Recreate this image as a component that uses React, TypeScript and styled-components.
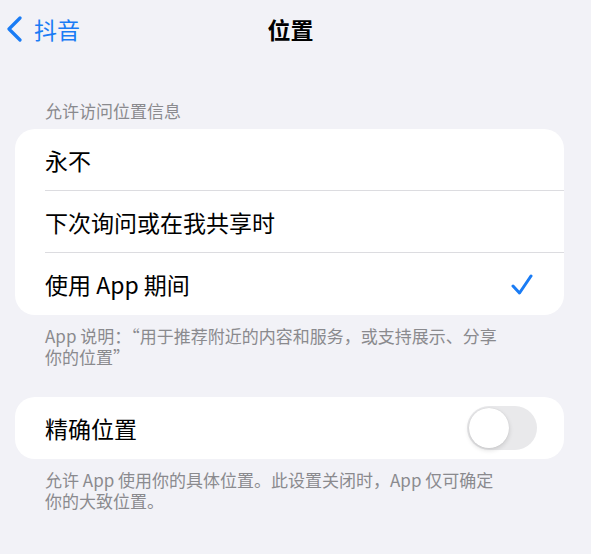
import styled, { createGlobalStyle } from "styled-components";

const GlobalStyle = createGlobalStyle`
  html, body {
    margin: 0;
    padding: 0;
    background: #f2f2f7;
  }
  body {
    font-family: "Noto Sans CJK SC", "Noto Sans", sans-serif;
    -webkit-font-smoothing: antialiased;
  }
`;

const Page = styled.div`
  width: 591px;
  min-height: 554px;
  background: #f2f2f7;
  display: flex;
  flex-direction: column;
`;

const NavBar = styled.div`
  height: 58px;
  padding-right: 10px;
  display: grid;
  grid-template-columns: 1fr auto 1fr;
  align-items: center;
`;

const BackButton = styled.a`
  display: flex;
  align-items: center;
  gap: 11px;
  padding-left: 6px;
  color: #1a7cf5;
  font-size: 23px;
  line-height: 28px;
  cursor: pointer;
`;

const NavTitle = styled.h1`
  margin: 0;
  font-size: 23px;
  line-height: 28px;
  font-weight: 700;
  color: #000000;
`;

const SectionHeader = styled.div`
  margin-top: 42px;
  padding: 0 45px;
  font-size: 17px;
  line-height: 22px;
  color: #8a8a8e;
`;

const Card = styled.div<{ $top: number }>`
  margin: ${(p) => p.$top}px 27px 0 15px;
  background: #ffffff;
  border-radius: 20px;
  overflow: hidden;
`;

const Row = styled.div`
  height: 62px;
  margin-left: 30px;
  padding-right: 27px;
  display: flex;
  align-items: center;
  justify-content: space-between;
  border-bottom: 1px solid #dcdce0;
  box-sizing: border-box;
  font-size: 23px;
  color: #000000;

  &:last-child {
    border-bottom: none;
  }
`;

const Footer = styled.div`
  padding: 10px 45px 0;
  font-size: 17px;
  line-height: 21px;
  color: #8a8a8e;
`;

const Track = styled.div<{ $on: boolean }>`
  width: 70px;
  height: 44px;
  border-radius: 22px;
  background: ${(p) => (p.$on ? "#34c759" : "#e9e9eb")};
  display: flex;
  align-items: center;
  justify-content: ${(p) => (p.$on ? "flex-end" : "flex-start")};
  padding: 0 2px;
  box-sizing: border-box;
`;

const Knob = styled.div`
  width: 40px;
  height: 40px;
  border-radius: 50%;
  background: #ffffff;
  box-shadow: 0 2px 5px rgba(0, 0, 0, 0.14), 0 0 1px rgba(0, 0, 0, 0.12);
`;

const Chevron = () => (
  <svg width="17" height="26" viewBox="0 0 17 26">
    <polyline
      points="14,2 3,13 14,24"
      fill="none"
      stroke="#1a7cf5"
      strokeWidth="3.2"
      strokeLinecap="round"
      strokeLinejoin="round"
    />
  </svg>
);

const Check = () => (
  <svg width="22" height="22" viewBox="0 0 22 22" style={{ marginRight: 4, marginTop: 2 }}>
    <polyline
      points="2,12 8.5,19 20,2"
      fill="none"
      stroke="#1a7cf5"
      strokeWidth="3"
      strokeLinecap="round"
      strokeLinejoin="round"
    />
  </svg>
);

const Toggle = ({ on }: { on: boolean }) => (
  <Track $on={on}>
    <Knob />
  </Track>
);

const options = ["永不", "下次询问或在我共享时", "使用 App 期间"];

export default function App() {
  const selected = 2;

  return (
    <Page>
      <GlobalStyle />
      <NavBar>
        <BackButton>
          <Chevron />
          抖音
        </BackButton>
        <NavTitle>位置</NavTitle>
        <div />
      </NavBar>

      <SectionHeader>允许访问位置信息</SectionHeader>
      <Card $top={7}>
        {options.map((label, i) => (
          <Row key={label}>
            <span>{label}</span>
            {i === selected && <Check />}
          </Row>
        ))}
      </Card>
      <Footer>
        App 说明：“用于推荐附近的内容和服务，或支持展示、分享
        <br />
        你的位置”
      </Footer>

      <Card $top={30}>
        <Row>
          <span>精确位置</span>
          <Toggle on={false} />
        </Row>
      </Card>
      <Footer>
        允许 App 使用你的具体位置。此设置关闭时，App 仅可确定
        <br />
        你的大致位置。
      </Footer>
    </Page>
  );
}
